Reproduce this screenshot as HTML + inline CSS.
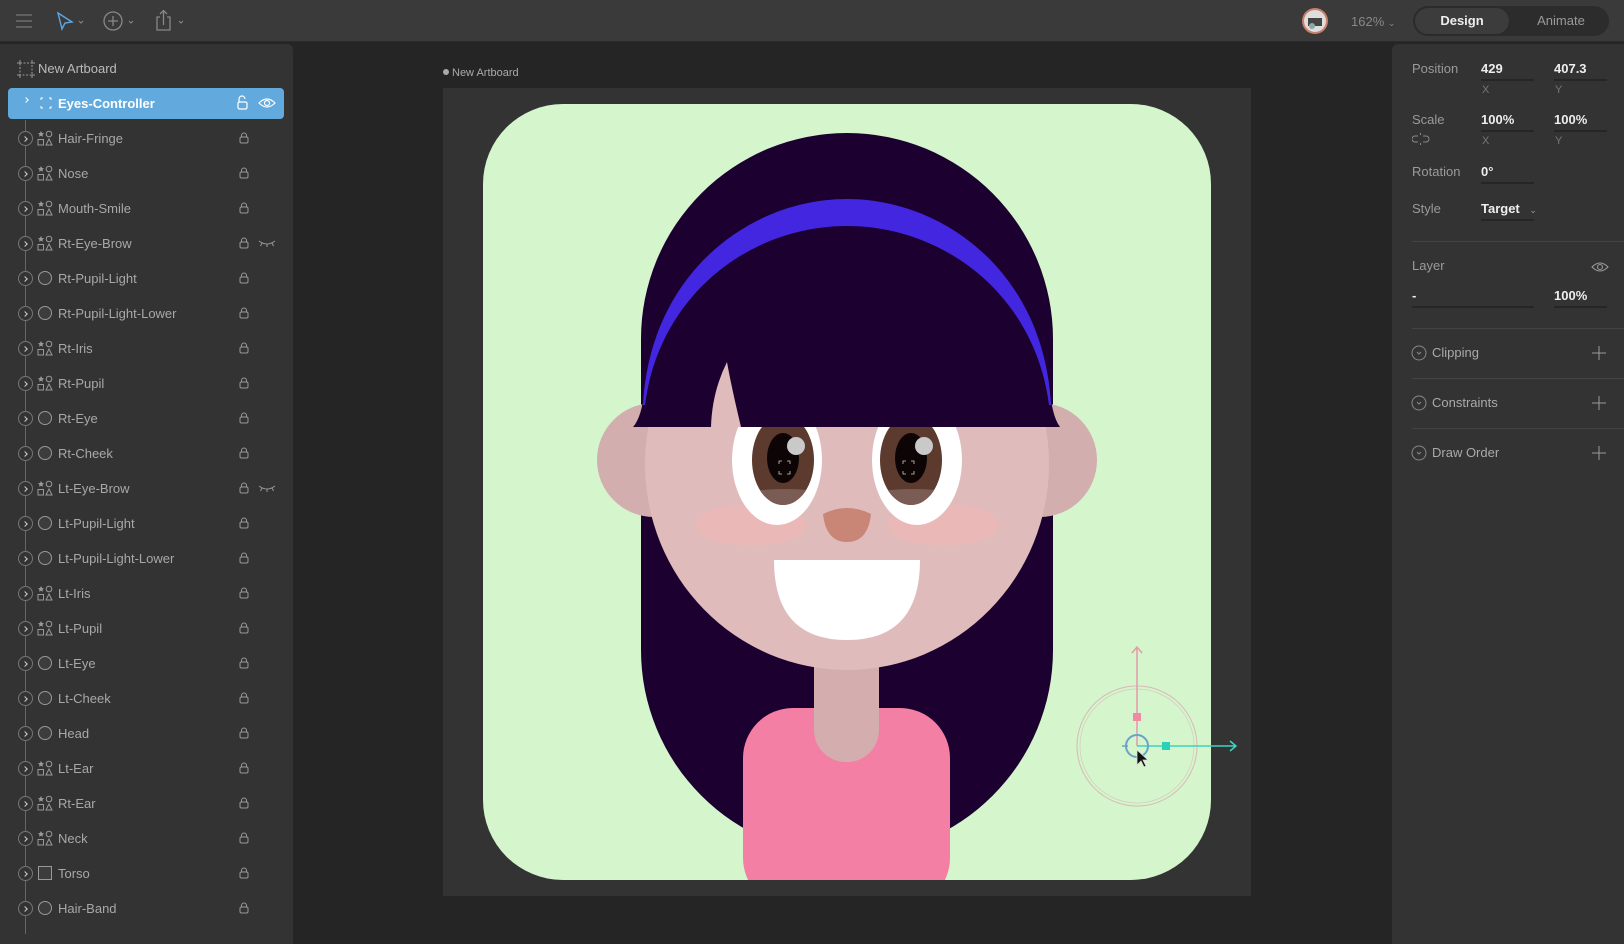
<!DOCTYPE html>
<html><head><meta charset="utf-8"><style>
*{margin:0;padding:0;box-sizing:border-box}
body{width:1624px;height:934px;background:#252525;font-family:"Liberation Sans",sans-serif;position:relative;overflow:hidden;color:#bbb}
.top{position:absolute;left:0;top:0;width:1624px;height:42px;background:#3a3a3a;border-bottom:1px solid #2a2a2a}
.lp{position:absolute;left:0;top:44px;width:293px;height:900px;background:#333;border-radius:0 6px 0 0}
.rp{position:absolute;left:1392px;top:44px;width:232px;height:900px;background:#333;border-radius:6px 0 0 0}
.row{position:absolute;left:0;width:293px;height:35px;font-size:13px;color:#a8a8a8}
.row .ch{position:absolute;left:18px;top:10px;width:15px;height:15px;border:1px solid #777;border-radius:50%;background:#333}
.row .ch:after{content:"";position:absolute;left:4px;top:5px;width:3px;height:3px;border-right:1.3px solid #ccc;border-bottom:1.3px solid #ccc;transform:rotate(-45deg)}
.row .ic{position:absolute;left:37px;top:9px}
.row .nm{position:absolute;left:58px;top:10px}
.row .lk{position:absolute;left:239px;top:11px}
.row .ey{position:absolute;left:258px;top:13px}
.vl{position:absolute;left:25px;top:120px;width:1px;height:814px;background:#666}
.lbl{position:absolute;font-size:13px;color:#9a9a9a}
.val{position:absolute;font-size:13px;color:#eee;font-weight:bold}
.ul{position:absolute;height:2px;background:#262626}
.sep{position:absolute;left:1412px;width:212px;height:1px;background:#444}
</style></head><body>
<div class="top">
<svg width="400" height="42" style="position:absolute;left:0;top:0">
<g stroke="#777" stroke-width="1.3" fill="none">
<path d="M16 15h16M16 21h16M16 27h16"/>
</g>
<path d="M58 13 L72 22 L65 23 L62 29 Z" fill="none" stroke="#5fa7e0" stroke-width="1.4"/>
<path d="M79 21l2 2 2-2" stroke="#888" fill="none"/>
<circle cx="113" cy="21" r="9" stroke="#888" fill="none" stroke-width="1.3"/>
<path d="M113 16v10M108 21h10" stroke="#888" stroke-width="1.3"/>
<path d="M129 21l2 2 2-2" stroke="#888" fill="none"/>
<path d="M160 17h-3v13h13v-13h-3M163.5 25v-14M160 14l3.5-3.5 3.5 3.5" stroke="#888" fill="none" stroke-width="1.3"/>
<path d="M179 21l2 2 2-2" stroke="#888" fill="none"/>
</svg>
<svg width="30" height="30" style="position:absolute;left:1300px;top:6px"><circle cx="15" cy="15" r="13" fill="#c87f6b"/><circle cx="15" cy="15" r="11" fill="#ddd"/><path d="M8 12h14v8H8z" fill="#444"/><circle cx="12" cy="20" r="3" fill="#8aa"/></svg>
<div style="position:absolute;left:1351px;top:14px;font-size:13px;color:#888">162% <span style="font-size:9px">⌄</span></div>
<div style="position:absolute;left:1413px;top:6px;width:196px;height:30px;border-radius:15px;background:#2c2c2c">
<div style="position:absolute;left:1px;top:1px;width:96px;height:28px;border-radius:14px;background:#3c3c3c;border:1px solid #2a2a2a;color:#eee;font-weight:bold;font-size:13px;text-align:center;line-height:26px">Design</div>
<div style="position:absolute;left:100px;top:0;width:96px;height:30px;color:#999;font-size:13px;text-align:center;line-height:30px">Animate</div>
</div>
</div>

<div class="lp"></div>
<svg width="20" height="20" style="position:absolute;left:16px;top:59px"><rect x="4" y="4" width="12" height="12" fill="none" stroke="#999" stroke-dasharray="2 1.5"/><path d="M1 4h3M16 4h3M1 16h3M16 16h3M4 1v3M16 1v3M4 16v3M16 16v3" stroke="#999"/></svg>
<div style="position:absolute;left:38px;top:61px;font-size:13px;color:#bbb">New Artboard</div>
<div class="vl"></div>
<div style="position:absolute;left:8px;top:88px;width:276px;height:31px;background:#62aade;border-radius:4px"></div>
<div style="position:absolute;left:24px;top:98px;width:4px;height:4px;border-right:1.3px solid #fff;border-bottom:1.3px solid #fff;transform:rotate(-45deg)"></div>
<svg width="12" height="12" style="position:absolute;left:40px;top:97px"><path d="M1 3V1h2M9 1h2v2M11 9v2H9M3 11H1V9" stroke="#fff" fill="none"/></svg>
<div style="position:absolute;left:58px;top:96px;font-size:13px;color:#fff;font-weight:bold">Eyes-Controller</div>
<svg width="16" height="16" style="position:absolute;left:234px;top:95px"><rect x="4" y="7" width="9" height="7" rx="1.5" fill="none" stroke="#fff" stroke-width="1.2"/><path d="M5 7V4a3 3 0 0 1 6-0" fill="none" stroke="#fff" stroke-width="1.2"/></svg>
<svg width="18" height="12" style="position:absolute;left:258px;top:97px"><path d="M1 6Q9-2 17 6Q9 14 1 6Z" fill="none" stroke="#fff" stroke-width="1.2"/><circle cx="9" cy="6" r="2.5" fill="none" stroke="#fff" stroke-width="1.2"/></svg>

<div class="row" style="top:121px"><div class="ch"></div><svg class="ic" width="16" height="16"><path d="M4 1l1 2 2 .3-1.5 1.4.4 2L4 5.7 2.1 6.7l.4-2L1 3.3 3 3z" fill="#999"/><circle cx="12" cy="4" r="2.8" fill="none" stroke="#999"/><rect x="1" y="9.5" width="5.5" height="5.5" fill="none" stroke="#999"/><path d="M12 9l3 6H9z" fill="none" stroke="#999"/></svg><div class="nm">Hair-Fringe</div><svg class="lk" width="10" height="12"><rect x="1" y="5" width="8" height="6" rx="1.5" fill="none" stroke="#999"/><path d="M2.5 5V3.5a2.5 2.5 0 0 1 5 0V5" fill="none" stroke="#999"/></svg></div>
<div class="row" style="top:156px"><div class="ch"></div><svg class="ic" width="16" height="16"><path d="M4 1l1 2 2 .3-1.5 1.4.4 2L4 5.7 2.1 6.7l.4-2L1 3.3 3 3z" fill="#999"/><circle cx="12" cy="4" r="2.8" fill="none" stroke="#999"/><rect x="1" y="9.5" width="5.5" height="5.5" fill="none" stroke="#999"/><path d="M12 9l3 6H9z" fill="none" stroke="#999"/></svg><div class="nm">Nose</div><svg class="lk" width="10" height="12"><rect x="1" y="5" width="8" height="6" rx="1.5" fill="none" stroke="#999"/><path d="M2.5 5V3.5a2.5 2.5 0 0 1 5 0V5" fill="none" stroke="#999"/></svg></div>
<div class="row" style="top:191px"><div class="ch"></div><svg class="ic" width="16" height="16"><path d="M4 1l1 2 2 .3-1.5 1.4.4 2L4 5.7 2.1 6.7l.4-2L1 3.3 3 3z" fill="#999"/><circle cx="12" cy="4" r="2.8" fill="none" stroke="#999"/><rect x="1" y="9.5" width="5.5" height="5.5" fill="none" stroke="#999"/><path d="M12 9l3 6H9z" fill="none" stroke="#999"/></svg><div class="nm">Mouth-Smile</div><svg class="lk" width="10" height="12"><rect x="1" y="5" width="8" height="6" rx="1.5" fill="none" stroke="#999"/><path d="M2.5 5V3.5a2.5 2.5 0 0 1 5 0V5" fill="none" stroke="#999"/></svg></div>
<div class="row" style="top:226px"><div class="ch"></div><svg class="ic" width="16" height="16"><path d="M4 1l1 2 2 .3-1.5 1.4.4 2L4 5.7 2.1 6.7l.4-2L1 3.3 3 3z" fill="#999"/><circle cx="12" cy="4" r="2.8" fill="none" stroke="#999"/><rect x="1" y="9.5" width="5.5" height="5.5" fill="none" stroke="#999"/><path d="M12 9l3 6H9z" fill="none" stroke="#999"/></svg><div class="nm">Rt-Eye-Brow</div><svg class="lk" width="10" height="12"><rect x="1" y="5" width="8" height="6" rx="1.5" fill="none" stroke="#999"/><path d="M2.5 5V3.5a2.5 2.5 0 0 1 5 0V5" fill="none" stroke="#999"/></svg><svg class="ey" width="18" height="10"><path d="M1 2Q9 8 17 2M4 4l-1.5 3M9 5v3M14 4l1.5 3" fill="none" stroke="#999"/></svg></div>
<div class="row" style="top:261px"><div class="ch"></div><svg class="ic" width="16" height="16"><circle cx="8" cy="8" r="6.5" fill="#3c3c3c" stroke="#999"/></svg><div class="nm">Rt-Pupil-Light</div><svg class="lk" width="10" height="12"><rect x="1" y="5" width="8" height="6" rx="1.5" fill="none" stroke="#999"/><path d="M2.5 5V3.5a2.5 2.5 0 0 1 5 0V5" fill="none" stroke="#999"/></svg></div>
<div class="row" style="top:296px"><div class="ch"></div><svg class="ic" width="16" height="16"><circle cx="8" cy="8" r="6.5" fill="#3c3c3c" stroke="#999"/></svg><div class="nm">Rt-Pupil-Light-Lower</div><svg class="lk" width="10" height="12"><rect x="1" y="5" width="8" height="6" rx="1.5" fill="none" stroke="#999"/><path d="M2.5 5V3.5a2.5 2.5 0 0 1 5 0V5" fill="none" stroke="#999"/></svg></div>
<div class="row" style="top:331px"><div class="ch"></div><svg class="ic" width="16" height="16"><path d="M4 1l1 2 2 .3-1.5 1.4.4 2L4 5.7 2.1 6.7l.4-2L1 3.3 3 3z" fill="#999"/><circle cx="12" cy="4" r="2.8" fill="none" stroke="#999"/><rect x="1" y="9.5" width="5.5" height="5.5" fill="none" stroke="#999"/><path d="M12 9l3 6H9z" fill="none" stroke="#999"/></svg><div class="nm">Rt-Iris</div><svg class="lk" width="10" height="12"><rect x="1" y="5" width="8" height="6" rx="1.5" fill="none" stroke="#999"/><path d="M2.5 5V3.5a2.5 2.5 0 0 1 5 0V5" fill="none" stroke="#999"/></svg></div>
<div class="row" style="top:366px"><div class="ch"></div><svg class="ic" width="16" height="16"><path d="M4 1l1 2 2 .3-1.5 1.4.4 2L4 5.7 2.1 6.7l.4-2L1 3.3 3 3z" fill="#999"/><circle cx="12" cy="4" r="2.8" fill="none" stroke="#999"/><rect x="1" y="9.5" width="5.5" height="5.5" fill="none" stroke="#999"/><path d="M12 9l3 6H9z" fill="none" stroke="#999"/></svg><div class="nm">Rt-Pupil</div><svg class="lk" width="10" height="12"><rect x="1" y="5" width="8" height="6" rx="1.5" fill="none" stroke="#999"/><path d="M2.5 5V3.5a2.5 2.5 0 0 1 5 0V5" fill="none" stroke="#999"/></svg></div>
<div class="row" style="top:401px"><div class="ch"></div><svg class="ic" width="16" height="16"><circle cx="8" cy="8" r="6.5" fill="#3c3c3c" stroke="#999"/></svg><div class="nm">Rt-Eye</div><svg class="lk" width="10" height="12"><rect x="1" y="5" width="8" height="6" rx="1.5" fill="none" stroke="#999"/><path d="M2.5 5V3.5a2.5 2.5 0 0 1 5 0V5" fill="none" stroke="#999"/></svg></div>
<div class="row" style="top:436px"><div class="ch"></div><svg class="ic" width="16" height="16"><circle cx="8" cy="8" r="6.5" fill="#3c3c3c" stroke="#999"/></svg><div class="nm">Rt-Cheek</div><svg class="lk" width="10" height="12"><rect x="1" y="5" width="8" height="6" rx="1.5" fill="none" stroke="#999"/><path d="M2.5 5V3.5a2.5 2.5 0 0 1 5 0V5" fill="none" stroke="#999"/></svg></div>
<div class="row" style="top:471px"><div class="ch"></div><svg class="ic" width="16" height="16"><path d="M4 1l1 2 2 .3-1.5 1.4.4 2L4 5.7 2.1 6.7l.4-2L1 3.3 3 3z" fill="#999"/><circle cx="12" cy="4" r="2.8" fill="none" stroke="#999"/><rect x="1" y="9.5" width="5.5" height="5.5" fill="none" stroke="#999"/><path d="M12 9l3 6H9z" fill="none" stroke="#999"/></svg><div class="nm">Lt-Eye-Brow</div><svg class="lk" width="10" height="12"><rect x="1" y="5" width="8" height="6" rx="1.5" fill="none" stroke="#999"/><path d="M2.5 5V3.5a2.5 2.5 0 0 1 5 0V5" fill="none" stroke="#999"/></svg><svg class="ey" width="18" height="10"><path d="M1 2Q9 8 17 2M4 4l-1.5 3M9 5v3M14 4l1.5 3" fill="none" stroke="#999"/></svg></div>
<div class="row" style="top:506px"><div class="ch"></div><svg class="ic" width="16" height="16"><circle cx="8" cy="8" r="6.5" fill="#3c3c3c" stroke="#999"/></svg><div class="nm">Lt-Pupil-Light</div><svg class="lk" width="10" height="12"><rect x="1" y="5" width="8" height="6" rx="1.5" fill="none" stroke="#999"/><path d="M2.5 5V3.5a2.5 2.5 0 0 1 5 0V5" fill="none" stroke="#999"/></svg></div>
<div class="row" style="top:541px"><div class="ch"></div><svg class="ic" width="16" height="16"><circle cx="8" cy="8" r="6.5" fill="#3c3c3c" stroke="#999"/></svg><div class="nm">Lt-Pupil-Light-Lower</div><svg class="lk" width="10" height="12"><rect x="1" y="5" width="8" height="6" rx="1.5" fill="none" stroke="#999"/><path d="M2.5 5V3.5a2.5 2.5 0 0 1 5 0V5" fill="none" stroke="#999"/></svg></div>
<div class="row" style="top:576px"><div class="ch"></div><svg class="ic" width="16" height="16"><path d="M4 1l1 2 2 .3-1.5 1.4.4 2L4 5.7 2.1 6.7l.4-2L1 3.3 3 3z" fill="#999"/><circle cx="12" cy="4" r="2.8" fill="none" stroke="#999"/><rect x="1" y="9.5" width="5.5" height="5.5" fill="none" stroke="#999"/><path d="M12 9l3 6H9z" fill="none" stroke="#999"/></svg><div class="nm">Lt-Iris</div><svg class="lk" width="10" height="12"><rect x="1" y="5" width="8" height="6" rx="1.5" fill="none" stroke="#999"/><path d="M2.5 5V3.5a2.5 2.5 0 0 1 5 0V5" fill="none" stroke="#999"/></svg></div>
<div class="row" style="top:611px"><div class="ch"></div><svg class="ic" width="16" height="16"><path d="M4 1l1 2 2 .3-1.5 1.4.4 2L4 5.7 2.1 6.7l.4-2L1 3.3 3 3z" fill="#999"/><circle cx="12" cy="4" r="2.8" fill="none" stroke="#999"/><rect x="1" y="9.5" width="5.5" height="5.5" fill="none" stroke="#999"/><path d="M12 9l3 6H9z" fill="none" stroke="#999"/></svg><div class="nm">Lt-Pupil</div><svg class="lk" width="10" height="12"><rect x="1" y="5" width="8" height="6" rx="1.5" fill="none" stroke="#999"/><path d="M2.5 5V3.5a2.5 2.5 0 0 1 5 0V5" fill="none" stroke="#999"/></svg></div>
<div class="row" style="top:646px"><div class="ch"></div><svg class="ic" width="16" height="16"><circle cx="8" cy="8" r="6.5" fill="#3c3c3c" stroke="#999"/></svg><div class="nm">Lt-Eye</div><svg class="lk" width="10" height="12"><rect x="1" y="5" width="8" height="6" rx="1.5" fill="none" stroke="#999"/><path d="M2.5 5V3.5a2.5 2.5 0 0 1 5 0V5" fill="none" stroke="#999"/></svg></div>
<div class="row" style="top:681px"><div class="ch"></div><svg class="ic" width="16" height="16"><circle cx="8" cy="8" r="6.5" fill="#3c3c3c" stroke="#999"/></svg><div class="nm">Lt-Cheek</div><svg class="lk" width="10" height="12"><rect x="1" y="5" width="8" height="6" rx="1.5" fill="none" stroke="#999"/><path d="M2.5 5V3.5a2.5 2.5 0 0 1 5 0V5" fill="none" stroke="#999"/></svg></div>
<div class="row" style="top:716px"><div class="ch"></div><svg class="ic" width="16" height="16"><circle cx="8" cy="8" r="6.5" fill="#3c3c3c" stroke="#999"/></svg><div class="nm">Head</div><svg class="lk" width="10" height="12"><rect x="1" y="5" width="8" height="6" rx="1.5" fill="none" stroke="#999"/><path d="M2.5 5V3.5a2.5 2.5 0 0 1 5 0V5" fill="none" stroke="#999"/></svg></div>
<div class="row" style="top:751px"><div class="ch"></div><svg class="ic" width="16" height="16"><path d="M4 1l1 2 2 .3-1.5 1.4.4 2L4 5.7 2.1 6.7l.4-2L1 3.3 3 3z" fill="#999"/><circle cx="12" cy="4" r="2.8" fill="none" stroke="#999"/><rect x="1" y="9.5" width="5.5" height="5.5" fill="none" stroke="#999"/><path d="M12 9l3 6H9z" fill="none" stroke="#999"/></svg><div class="nm">Lt-Ear</div><svg class="lk" width="10" height="12"><rect x="1" y="5" width="8" height="6" rx="1.5" fill="none" stroke="#999"/><path d="M2.5 5V3.5a2.5 2.5 0 0 1 5 0V5" fill="none" stroke="#999"/></svg></div>
<div class="row" style="top:786px"><div class="ch"></div><svg class="ic" width="16" height="16"><path d="M4 1l1 2 2 .3-1.5 1.4.4 2L4 5.7 2.1 6.7l.4-2L1 3.3 3 3z" fill="#999"/><circle cx="12" cy="4" r="2.8" fill="none" stroke="#999"/><rect x="1" y="9.5" width="5.5" height="5.5" fill="none" stroke="#999"/><path d="M12 9l3 6H9z" fill="none" stroke="#999"/></svg><div class="nm">Rt-Ear</div><svg class="lk" width="10" height="12"><rect x="1" y="5" width="8" height="6" rx="1.5" fill="none" stroke="#999"/><path d="M2.5 5V3.5a2.5 2.5 0 0 1 5 0V5" fill="none" stroke="#999"/></svg></div>
<div class="row" style="top:821px"><div class="ch"></div><svg class="ic" width="16" height="16"><path d="M4 1l1 2 2 .3-1.5 1.4.4 2L4 5.7 2.1 6.7l.4-2L1 3.3 3 3z" fill="#999"/><circle cx="12" cy="4" r="2.8" fill="none" stroke="#999"/><rect x="1" y="9.5" width="5.5" height="5.5" fill="none" stroke="#999"/><path d="M12 9l3 6H9z" fill="none" stroke="#999"/></svg><div class="nm">Neck</div><svg class="lk" width="10" height="12"><rect x="1" y="5" width="8" height="6" rx="1.5" fill="none" stroke="#999"/><path d="M2.5 5V3.5a2.5 2.5 0 0 1 5 0V5" fill="none" stroke="#999"/></svg></div>
<div class="row" style="top:856px"><div class="ch"></div><svg class="ic" width="16" height="16"><rect x="1.5" y="1.5" width="13" height="13" fill="#3c3c3c" stroke="#999"/></svg><div class="nm">Torso</div><svg class="lk" width="10" height="12"><rect x="1" y="5" width="8" height="6" rx="1.5" fill="none" stroke="#999"/><path d="M2.5 5V3.5a2.5 2.5 0 0 1 5 0V5" fill="none" stroke="#999"/></svg></div>
<div class="row" style="top:891px"><div class="ch"></div><svg class="ic" width="16" height="16"><circle cx="8" cy="8" r="6.5" fill="#3c3c3c" stroke="#999"/></svg><div class="nm">Hair-Band</div><svg class="lk" width="10" height="12"><rect x="1" y="5" width="8" height="6" rx="1.5" fill="none" stroke="#999"/><path d="M2.5 5V3.5a2.5 2.5 0 0 1 5 0V5" fill="none" stroke="#999"/></svg></div>

<!-- canvas -->
<div style="position:absolute;left:443px;top:67px;font-size:11px;color:#aaa"><span style="display:inline-block;width:6px;height:6px;border-radius:50%;background:#aaa;margin-right:3px;vertical-align:1px"></span>New Artboard</div>
<svg width="1624" height="934" style="position:absolute;left:0;top:0;pointer-events:none">
<rect x="443" y="88" width="808" height="808" fill="#333"/>
<rect x="483" y="104" width="728" height="776" rx="80" fill="#d5f5cc"/>
<clipPath id="c"><rect x="483" y="104" width="728" height="776" rx="80"/></clipPath>
<clipPath id="i1"><ellipse cx="783" cy="460" rx="31" ry="45"/></clipPath>
<clipPath id="i2"><ellipse cx="911" cy="460" rx="31" ry="45"/></clipPath>
<g clip-path="url(#c)">
<path d="M641 339 A206 206 0 0 1 1053 339 V650 A206 206 0 0 1 641 650 Z" fill="#1c0030"/>
<circle cx="654" cy="460" r="57" fill="#d3aeae"/>
<circle cx="1040" cy="460" r="57" fill="#d3aeae"/>
<rect x="743" y="708" width="207" height="200" rx="50" fill="#f47fa4"/>
<rect x="814" y="620" width="65" height="142" rx="32" fill="#d4aeae"/>
<ellipse cx="847" cy="464" rx="202" ry="206" fill="#dfbbbb"/>
<!-- fringe -->
<path d="M633 427 Q648 410 645 345 A202 206 0 0 1 1049 345 Q1047 410 1060 427 H741 Q731 385 727 362 Q712 392 711 427 Z" fill="#1c0030"/>
<!-- headband -->
<path d="M643 405 C650 273 750 199 847 199 C944 199 1044 273 1051 405 L1049 405 C1035 295 944 226 847 226 C750 226 659 295 645 405 Z" fill="#4327e0"/>
<!-- cheeks -->
<ellipse cx="751" cy="525" rx="56" ry="21" fill="#ebb8b8"/>
<ellipse cx="943" cy="525" rx="56" ry="21" fill="#ebb8b8"/>
<!-- eyes -->
<clipPath id="e"><rect x="600" y="427" width="500" height="200"/></clipPath>
<g clip-path="url(#e)">
<ellipse cx="777" cy="460" rx="45" ry="65" fill="#fff"/>
<ellipse cx="783" cy="460" rx="31" ry="45" fill="#5c3a2e"/>
<ellipse cx="783" cy="458" rx="16" ry="25" fill="#0d0505"/>
<path d="M740 493 Q783 485 830 493 V520 H740Z" fill="#7b5c55" clip-path="url(#i1)"/>
<circle cx="796" cy="446" r="9" fill="#c9c9c9"/>
<ellipse cx="917" cy="460" rx="45" ry="65" fill="#fff"/>
<ellipse cx="911" cy="460" rx="31" ry="45" fill="#5c3a2e"/>
<ellipse cx="911" cy="458" rx="16" ry="25" fill="#0d0505"/>
<path d="M868 493 Q911 485 958 493 V520 H868Z" fill="#7b5c55" clip-path="url(#i2)"/>
<circle cx="924" cy="446" r="9" fill="#c9c9c9"/>
</g>
<path d="M779 464v-3h3M787 461h3v3M790 471v3h-3M782 474h-3v-3M903 464v-3h3M911 461h3v3M914 471v3h-3M906 474h-3v-3" stroke="#ccc" fill="none" stroke-width="0.8"/>
<!-- nose -->
<path d="M823 514 Q847 502 871 514 Q868 542 847 542 Q826 542 823 514Z" fill="#c98676"/>
<!-- mouth -->
<path d="M774 560 H920 Q920 640 847 640 Q774 640 774 560Z" fill="#fff"/>
</g>
<!-- gizmo -->
<circle cx="1137" cy="746" r="60" fill="none" stroke="#d8b8b8" stroke-width="1"/>
<circle cx="1137" cy="746" r="57" fill="none" stroke="#d8c8c0" stroke-width="0.7"/>
<path d="M1137 746 V647 M1132 653 l5-6 5 6" stroke="#e39aaa" fill="none" stroke-width="1.5"/>
<rect x="1133" y="713" width="8" height="8" fill="#f08aa4"/>
<path d="M1137 746 H1236 M1230 741 l6 5-6 5" stroke="#3fd3c0" fill="none" stroke-width="1.5"/>
<rect x="1162" y="742" width="8" height="8" fill="#2ad1b8"/>
<circle cx="1137" cy="746" r="11" fill="none" stroke="#6aa2c8" stroke-width="2"/>
<path d="M1122 746 h6" stroke="#6aa2c8" stroke-width="1.5"/>
<path d="M1137 750 l0 15 4-4 3 6 2-1-3-6 5 0z" fill="#111" stroke="#ddd" stroke-width="0.8"/>
</svg>

<!-- right panel -->
<div class="rp"></div>
<div class="lbl" style="left:1412px;top:61px">Position</div>
<div class="val" style="left:1481px;top:61px">429</div><div class="ul" style="left:1481px;top:79px;width:53px"></div>
<div class="val" style="left:1554px;top:61px">407.3</div><div class="ul" style="left:1554px;top:79px;width:53px"></div>
<div class="lbl" style="left:1482px;top:84px;font-size:11px;color:#777">X</div><div class="lbl" style="left:1555px;top:84px;font-size:11px;color:#777">Y</div>
<div class="lbl" style="left:1412px;top:112px">Scale</div>
<div class="val" style="left:1481px;top:112px">100%</div><div class="ul" style="left:1481px;top:130px;width:53px"></div>
<div class="val" style="left:1554px;top:112px">100%</div><div class="ul" style="left:1554px;top:130px;width:53px"></div>
<div class="lbl" style="left:1482px;top:135px;font-size:11px;color:#777">X</div><div class="lbl" style="left:1555px;top:135px;font-size:11px;color:#777">Y</div>
<svg width="18" height="14" style="position:absolute;left:1412px;top:132px"><path d="M6 4H3a3 3 0 0 0 0 6h3M11 4h3a3 3 0 0 1 0 6h-3M8.5 1v2M8.5 11v2" stroke="#888" fill="none"/></svg>
<div class="lbl" style="left:1412px;top:164px">Rotation</div>
<div class="val" style="left:1481px;top:164px">0°</div><div class="ul" style="left:1481px;top:182px;width:53px"></div>
<div class="lbl" style="left:1412px;top:201px">Style</div>
<div class="val" style="left:1481px;top:201px">Target <span style="font-size:9px;color:#999;font-weight:normal;margin-left:6px">⌄</span></div><div class="ul" style="left:1481px;top:219px;width:53px"></div>
<div class="sep" style="top:241px"></div>
<div class="lbl" style="left:1412px;top:258px">Layer</div>
<svg width="18" height="12" style="position:absolute;left:1591px;top:261px"><path d="M1 6Q9-2 17 6Q9 14 1 6Z" fill="none" stroke="#999" stroke-width="1.1"/><circle cx="9" cy="6" r="2.5" fill="none" stroke="#999" stroke-width="1.1"/></svg>
<div class="val" style="left:1412px;top:288px">-</div><div class="ul" style="left:1412px;top:306px;width:122px"></div>
<div class="val" style="left:1554px;top:288px">100%</div><div class="ul" style="left:1554px;top:306px;width:53px"></div>
<div class="sep" style="top:328px"></div>
<div class="sep" style="top:378px"></div>
<div class="sep" style="top:428px"></div>
<div class="lbl" style="left:1432px;top:345px;color:#aaa">Clipping</div>
<div class="lbl" style="left:1432px;top:395px;color:#aaa">Constraints</div>
<div class="lbl" style="left:1432px;top:445px;color:#aaa">Draw Order</div>
<svg width="232" height="140" style="position:absolute;left:1392px;top:336px">
<g stroke="#888" fill="none">
<circle cx="27" cy="17" r="7"/><path d="M25 16l2 2 2-2"/>
<circle cx="27" cy="67" r="7"/><path d="M25 66l2 2 2-2"/>
<circle cx="27" cy="117" r="7"/><path d="M25 116l2 2 2-2"/>
<path d="M207 10v14M200 17h14M207 60v14M200 67h14M207 110v14M200 117h14" stroke="#999"/>
</g></svg>
</body></html>
